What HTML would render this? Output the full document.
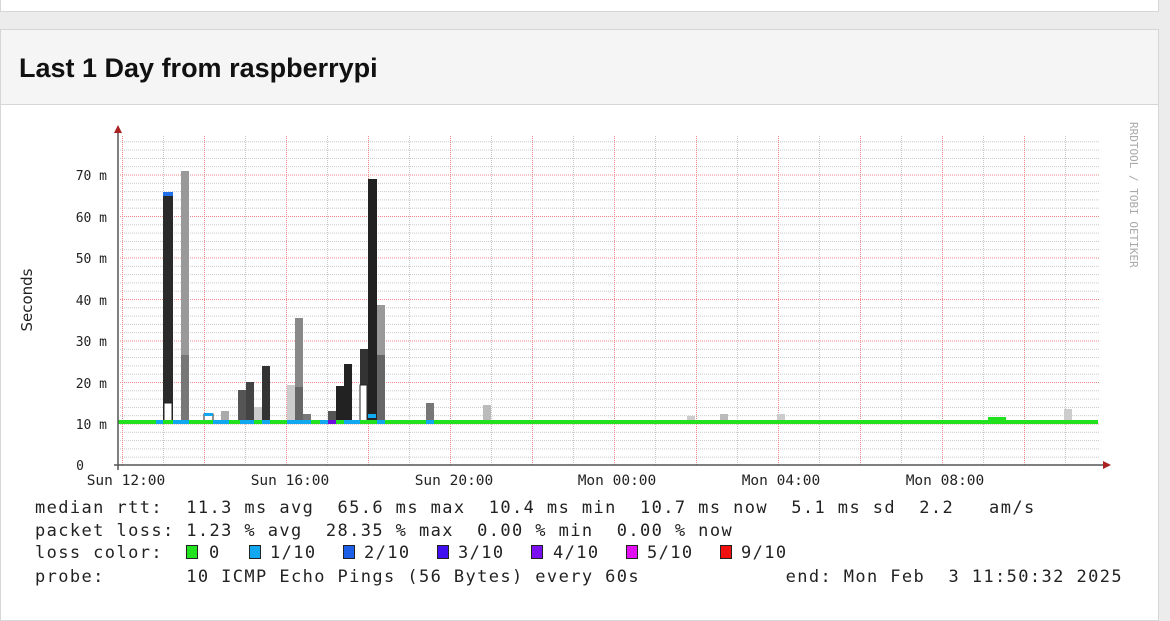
<!DOCTYPE html>
<html><head><meta charset="utf-8"><style>
body{margin:0;background:#ececec;width:1170px;height:617px;overflow:hidden;font-family:"Liberation Sans",sans-serif}
.top{position:absolute;left:0;top:-5px;width:1157px;height:16px;background:#fff;border:1px solid #d6d6d6;border-top:none}
.panel{position:absolute;left:0;top:29px;width:1157px;height:590px;background:#fff;border:1px solid #d6d6d6}
.hd{height:74px;background:#f5f5f5;border-bottom:1px solid #d6d6d6;font-weight:bold;font-size:27px;line-height:76px;padding-left:18px;color:#111}
svg{position:absolute;left:0;top:0}
</style></head><body>
<div class="top"></div>
<div class="panel"><div class="hd">Last 1 Day from raspberrypi</div></div>
<svg width="1170" height="617" font-family="DejaVu Sans Mono, Liberation Mono, monospace">
<defs>
<pattern id="h" x="0" y="465" width="20" height="8.3" patternUnits="userSpaceOnUse"><line x1="0" y1="0.5" x2="20" y2="0.5" stroke="#c8c8c8" stroke-dasharray="1 1"/></pattern>
<pattern id="v" x="122" y="0" width="41" height="20" patternUnits="userSpaceOnUse"><line x1="0.5" y1="0" x2="0.5" y2="20" stroke="#c8c8c8" stroke-dasharray="1 1"/></pattern>
<pattern id="H" x="0" y="465" width="20" height="41.5" patternUnits="userSpaceOnUse"><line x1="0" y1="0.5" x2="20" y2="0.5" stroke="#e88" stroke-dasharray="1 1"/></pattern>
<pattern id="V" x="122" y="0" width="82" height="20" patternUnits="userSpaceOnUse"><line x1="0.5" y1="0" x2="0.5" y2="20" stroke="#e88" stroke-dasharray="1 1"/></pattern>
</defs>
<rect x="119" y="135" width="980" height="330" fill="url(#h)"/>
<rect x="119" y="135" width="980" height="330" fill="url(#v)"/>
<rect x="119" y="135" width="980" height="330" fill="url(#H)"/>
<rect x="119" y="135" width="980" height="330" fill="url(#V)"/>
<g>
<rect x="163" y="195" width="10" height="228" fill="#2a2a2a"/><rect x="163" y="192" width="10" height="4" fill="#1e6fe8"/><rect x="164" y="403" width="8" height="18" fill="#fff" stroke="#222"/>
<rect x="181" y="171" width="8" height="252" fill="#999"/><rect x="181" y="355" width="8" height="68" fill="#777"/>
<rect x="221" y="411" width="8" height="12" fill="#aaa"/>
<rect x="238" y="390" width="8" height="33" fill="#555"/><rect x="246" y="382" width="8" height="41" fill="#444"/>
<rect x="254" y="407" width="8" height="16" fill="#ccc"/><rect x="262" y="366" width="8" height="57" fill="#333"/>
<rect x="287" y="385" width="8" height="38" fill="#ccc"/><rect x="295" y="318" width="8" height="105" fill="#888"/><rect x="295" y="387" width="8" height="36" fill="#666"/><rect x="303" y="414" width="8" height="9" fill="#777"/>
<rect x="328" y="411" width="8" height="12" fill="#555"/><rect x="336" y="386" width="8" height="37" fill="#222"/><rect x="344" y="364" width="8" height="59" fill="#222"/>
<rect x="360" y="349" width="8" height="74" fill="#333"/><rect x="360" y="385" width="7" height="36" fill="#fff" stroke="#222"/><rect x="368" y="179" width="9" height="244" fill="#222"/><rect x="377" y="305" width="8" height="118" fill="#999"/><rect x="377" y="355" width="8" height="68" fill="#666"/>
<rect x="426" y="403" width="8" height="20" fill="#777"/><rect x="483" y="405" width="8" height="18" fill="#bbb"/>
<rect x="687" y="416" width="8" height="7" fill="#ccc"/><rect x="720" y="414" width="8" height="9" fill="#bbb"/><rect x="777" y="414" width="8" height="9" fill="#ccc"/><rect x="1064" y="409" width="8" height="14" fill="#ccc"/>
<rect x="204" y="414" width="9" height="8" fill="#fff" stroke="#222"/><rect x="204" y="413" width="9" height="3" fill="#11a8f0"/>
</g>
<rect x="118" y="420" width="980" height="4" fill="#22e21f"/>
<g fill="#11a8f0"><rect x="156" y="420" width="7" height="4"/><rect x="173" y="420" width="16" height="4"/><rect x="213" y="420" width="16" height="4"/><rect x="240" y="420" width="14" height="4"/><rect x="262" y="420" width="8" height="4"/><rect x="287" y="420" width="24" height="4"/><rect x="320" y="420" width="8" height="4"/><rect x="344" y="420" width="16" height="4"/><rect x="377" y="420" width="8" height="4"/><rect x="368" y="414" width="8" height="4"/><rect x="426" y="420" width="8" height="4"/></g>
<rect x="328" y="420" width="8" height="4" fill="#6a0fe0"/>
<rect x="988" y="417" width="18" height="4" fill="#22e21f"/>
<line x1="118" y1="132" x2="118" y2="470" stroke="#555" stroke-width="1.5"/>
<line x1="114" y1="465" x2="1105" y2="465" stroke="#555" stroke-width="1.5"/>
<path d="M114 133 L118 125 L122 133Z" fill="#a22"/>
<path d="M1103 461 L1111 465 L1103 469Z" fill="#a22"/>
<g font-size="13" fill="#222" text-anchor="end">
<text x="107" y="180">70 m</text><text x="107" y="222">60 m</text><text x="107" y="263">50 m</text><text x="107" y="305">40 m</text><text x="107" y="346">30 m</text><text x="107" y="388">20 m</text><text x="107" y="429">10 m</text><text x="84" y="470">0</text>
</g>
<text transform="translate(32,300) rotate(-90)" font-family="DejaVu Sans, sans-serif" font-size="15" fill="#222" text-anchor="middle">Seconds</text>
<text transform="translate(1130,122) rotate(90)" font-size="11" fill="#aaa">RRDTOOL / TOBI OETIKER</text>
<g font-size="14.5" fill="#222" text-anchor="middle">
<text x="126" y="485">Sun 12:00</text><text x="290" y="485">Sun 16:00</text><text x="454" y="485">Sun 20:00</text><text x="617" y="485">Mon 00:00</text><text x="781" y="485">Mon 04:00</text><text x="945" y="485">Mon 08:00</text>
</g>
<g font-size="17" fill="#222" letter-spacing="1.4">
<text x="35" y="513">median rtt:&#160;&#160;11.3 ms avg&#160;&#160;65.6 ms max&#160;&#160;10.4 ms min&#160;&#160;10.7 ms now&#160;&#160;5.1 ms sd&#160;&#160;2.2&#160;&#160;&#160;am/s</text>
<text x="35" y="536">packet loss: 1.23 % avg&#160;&#160;28.35 % max&#160;&#160;0.00 % min&#160;&#160;0.00 % now</text>
<text x="35" y="558">loss color:</text>
<text x="35" y="582">probe:&#160;&#160;&#160;&#160;&#160;&#160;&#160;10 ICMP Echo Pings (56 Bytes) every 60s</text>
<text x="1123" y="582" text-anchor="end">end: Mon Feb&#160;&#160;3 11:50:32 2025</text>
<text x="209" y="558">0</text><text x="270" y="558">1/10</text><text x="364" y="558">2/10</text><text x="458" y="558">3/10</text><text x="553" y="558">4/10</text><text x="647" y="558">5/10</text><text x="741" y="558">9/10</text>
</g>
<g stroke="#222" stroke-width="1">
<rect x="186.5" y="545.5" width="11" height="13" fill="#22e21f"/>
<rect x="249.5" y="545.5" width="11" height="13" fill="#11a8f0"/>
<rect x="343.5" y="545.5" width="11" height="13" fill="#1e5fe8"/>
<rect x="437.5" y="545.5" width="11" height="13" fill="#4010f0"/>
<rect x="531.5" y="545.5" width="11" height="13" fill="#7a10f0"/>
<rect x="626.5" y="545.5" width="11" height="13" fill="#e010f0"/>
<rect x="720.5" y="545.5" width="11" height="13" fill="#f01010"/>
</g>
</svg>
</body></html>
